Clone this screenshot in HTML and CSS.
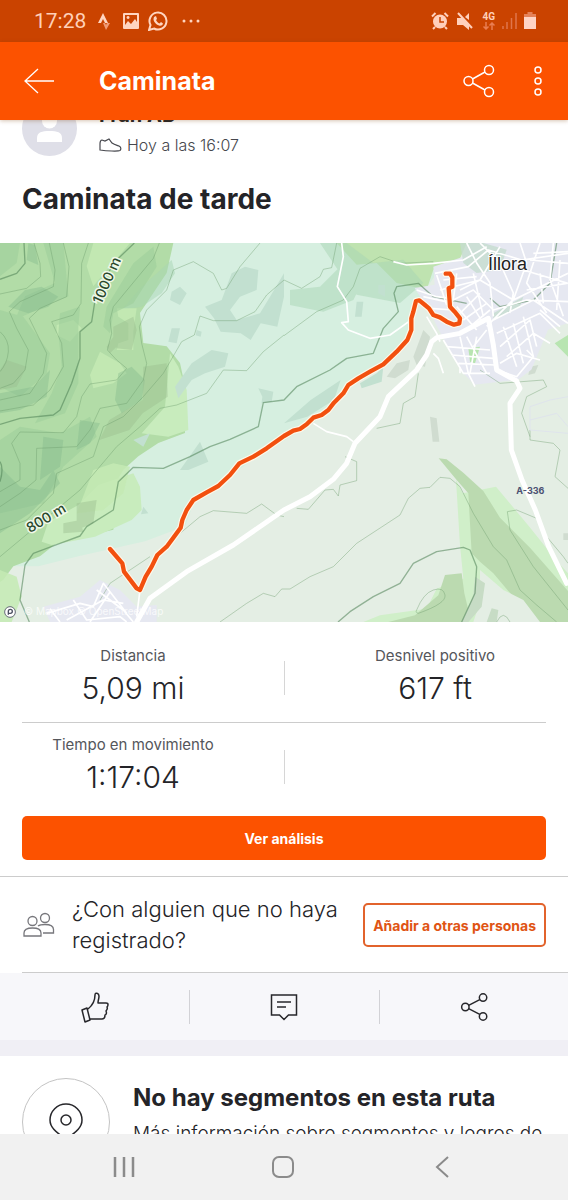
FILE: index.html
```
<!DOCTYPE html>
<html lang="es">
<head>
    <meta charset="UTF-8">
    <meta name="viewport" content="width=device-width, initial-scale=1.0">
    <title>Caminata</title>
    <link rel="stylesheet" href="styles.css">
</head>
<body>
    <div class="status-bar">
        <div class="status-left">
            <span class="clock">17:28</span>
            <svg width="12" height="18" viewBox="0 0 12 18"><path d="M0 11 5 1l5 10H7L5 7l-2 4z" fill="#ffd5c0"/><path d="M5 11h2l1 2 1-2h3l-4 7z" fill="#f09a75"/></svg>
            <svg class="icon-photo" width="18" height="18" viewBox="0 0 18 18"><path fill="#ffd5c0" fill-rule="evenodd" d="M2 1h14a1 1 0 0 1 1 1v14a1 1 0 0 1-1 1H2a1 1 0 0 1-1-1V2a1 1 0 0 1 1-1zm1 2v10l3-4 3 3 4-5 2 3V3zM6 4a1.500 1.500 0 1 0 .1 0z"/></svg>
            <svg width="20" height="20" viewBox="0 0 20 20"><path d="M1 19l1.500-5A8.500 8.500 0 1 1 6 17.500z" fill="none" stroke="#ffd5c0" stroke-width="2"/><path d="M6 6l2-1 1 3-1 1c1 2 2 3 3.500 3.500L13 11l2 1.500c-.5 2-2 2.500-4 2C8 13.500 5.500 10.500 5.500 8z" fill="#ffd5c0"/></svg>
            <svg class="icon-more" width="18" height="4" viewBox="0 0 18 4" fill="#ffd5c0"><circle cx="2" cy="2" r="1.500"/><circle cx="9" cy="2" r="1.500"/><circle cx="16" cy="2" r="1.500"/></svg>
        </div>
        <div class="status-right">
            <svg width="18" height="18" viewBox="0 0 18 18"><circle cx="9" cy="9.500" r="7" fill="#ffd0bc"/><path d="M1 4.500 4.500 1M17 4.500 13.500 1M4 15l-2 2M14 15l2 2" stroke="#ffd0bc" stroke-width="2"/><path d="M9 5v5h4" fill="none" stroke="#ca4300" stroke-width="1.500"/></svg>
            <svg width="18" height="18" viewBox="0 0 18 18"><path d="M1 6h5l7 7v5l-6-5H1zM9 5l4-4v7z" fill="#ffd0bc"/><path d="M2 1l14 15" stroke="#ffd0bc" stroke-width="2"/></svg>
            <span class="network">
                <span class="network-type">4G</span>
                <svg width="12" height="8" viewBox="0 0 12 8"><path d="M3 0v7M.5 4.500 3 7l2.500-2.500M9 8V1M6.500 3.500 9 1l2.500 2.500" fill="none" stroke="#e97d52" stroke-width="1.500"/></svg>
            </span>
            <svg width="15" height="18" viewBox="0 0 15 18"><path d="M1 14v3M5 10v7M9.500 6v11M14 1v16" stroke="#e0764b" stroke-width="1.500"/></svg>
            <svg width="12" height="18" viewBox="0 0 12 18"><path d="M3.500 0h5v2H12v4H0V2h3.500z" fill="#e58258"/><path d="M0 5h12v12H0z" fill="#ffd5c5"/></svg>
        </div>
    </div>

    <header class="app-bar">
        <button class="icon-button" aria-label="Atrás">
            <svg width="30" height="26" viewBox="0 0 30 26"><path d="M30 13H1M14 1 1 13l13 12" fill="none" stroke="#fff" stroke-width="1.300"/></svg>
        </button>
        <h1 class="app-title">Caminata</h1>
        <button class="icon-button" aria-label="Compartir">
            <svg width="32" height="34" viewBox="0 0 32 34" fill="none" stroke="#fff" stroke-width="1.500"><circle cx="5.500" cy="17" r="4.500"/><circle cx="26" cy="6" r="4.500"/><circle cx="26" cy="28" r="4.500"/><path d="M9.500 15 22 8M9.500 19 22 26"/></svg>
        </button>
        <button class="icon-button icon-menu" aria-label="Más opciones">
            <svg width="8" height="30" viewBox="0 0 8 30" fill="none" stroke="#fff" stroke-width="1.500"><circle cx="4" cy="4" r="3"/><circle cx="4" cy="15" r="3"/><circle cx="4" cy="26" r="3"/></svg>
        </button>
    </header>

    <main class="feed">
        <section class="author">
            <svg class="avatar" width="55" height="55" viewBox="0 0 55 55"><circle cx="27.500" cy="27.500" r="27.500" fill="#dfdfe8"/><circle cx="27.500" cy="20" r="7.500" fill="#fff"/><path d="M15 41v-4c0-6 5-7 12.500-7S40 31 40 37v4z" fill="#fff"/></svg>
            <div class="author-text">
                <div class="author-name">Fran AB</div>
                <div class="author-date">
                    <svg width="23" height="14" viewBox="0 0 23 14"><path d="M1 12V6c0-3 1-4 2-4l3 1 4-2 3 4c2 1.500 4 2 7 3 2 1 2.500 3 1 4.500C19 13.500 8 13 1 12z" fill="none" stroke="#46474d" stroke-width="1.200"/></svg>
                    <span>Hoy a las 16:07</span>
                </div>
            </div>
        </section>

        <h2 class="activity-title">Caminata de tarde</h2>

        <svg class="map" viewBox="0 9 1704 1137" role="img" aria-label="Mapa de la ruta">
            <defs>
                <path id="track" d="M1337 101h13l7 11v28l-11 5 4 55 14 15 16 20-2 15-16 4-22-9-20-13-20-7-13-20-12-10-17-14-10 2-8 32-6 20v35l-12 30-32 35-40 38-40 22-35 20-30 20-15 25-28 28-17 22-20 15-25 8-20 20-20 14-20 5-28 16-52 37-40 25-42 20-28 35-35 33-35 19-40 23-20 30-13 30-5 23-22 30-20 27-28 25-17 35-18 30-17 40-10-5-38-50-5-25-37-43"/>
            </defs>
            <rect y="9" width="1704" height="1137" fill="#e4eee4"/>
            <path fill="#d6efe0" d="M0 9h1400l-90 90-60 90-15 80-60 80-130 90-50 70-90 60-160 100-100 70-60 40-30 80-120 45-200 45-120 30H0z"/>

            <!-- woods and slopes -->
            <path fill="#b2dca7" d="M0 9h520l-20 90-80 120 10 90 70 10 40 50 15 70v140l-80 30-60 40-45 40-35 60 10 70-5 50-170 40-50 40-80 30-30 40-45 30-5 120H0z"/>
            <path fill="#c8ecbd" d="M510 340l25 40 25 70 5 120-60 20-80-10 70-80zM400 700l20 40 5 70-30 30-110 50-130 25-30-10 20-60 90-50 60-60z"/>
            <path fill="#bfe3b0" d="M1010 9h390l-30 70-70 10-20 60-90-20-60-60-60 5z"/>
            <path fill="#a7d6b4" opacity=".5" d="M960 9h80l80 60 90-10 60 70-70 60-130-25-60-80zM870 150l90-10 60-60 70 40-30 60-90 35-100-20zM515 60l-90 80-60 70 60-10 60-40 40-60z"/>
            <path fill="#c4eab4" opacity=".85" d="M280 9h110l-60 70-50 60-20-60zM300 335l60 35 20 30-40 30-60 15-10-40zM350 205h60l-10 70v55h-50l5-20 30-10v-50l-30-20zM0 990l50 20 15 60-30 76H0zM170 255l50-15 25 25-35 40-40-20zM280 690l60-20 50 10-20 80-60 50-80 10z"/>
            <path fill="#9fcf9b" opacity=".6" d="M0 9h60l-10 60-50 40zM130 9h60l15 160-70 30-90 40 30-70 90-40zM180 220l60-20-5 60v170l-40 90-90 30 50-90 30-80-10-100zM0 210l70 20 80 110-10 60-80 70-60-30zM0 600l60-40 120 20 90-50 20 60-100 90-60 110-130 30zM400 70l60-50 10 60-70 110-60 30-10 60-20-20 10-60z"/>
            <path fill="#82b98c" opacity=".38" d="M0 460l100-20 50-50-10 80-80 40-60 10zM75 150l50-10 50 30-30 30-60 20-60-20zM85 10l20 5 10 60-35-15zM355 400l40-20 40 40-10 60-60 40-20-40zM240 540l60 10-30 60-40 20zM0 680l60 60 60 10 40-60 20 40-90 90-90 60zM130 590l60 10-10 80-60 40z"/>
            <path fill="#9cbf90" opacity=".45" d="M430 380l70-10 3 100-75 50-40 50-90 30 30-60 100-60zM340 260l60-30 10 40-15 60-45-5-10-25zM230 790l60-10-10 70-50 20zM190 850l50-10 10 35-60 5zM320 320l40-60 20 30-50 50zM20 360l60 20-30 60-50 10v-60z"/>
            <path fill="#c2e0d0" d="M615 200l50-20 30-80 40-20 40 10-5 60-50 20-30 40 20 30 70-20 30-50 42-70V170l-20 90-50-10-30 50-30-20-60-5-20-40zM525 440l50-70 60-40 50 10-10 40-60 20-40 20-40 55zM515 155l25-15 20 20-20 35-30-15zM515 265h25l-10 45-25-5zM590 270l15 5-3 15-15-4zM775 445l45 10-5 30-30 5-10 70 12-90zM540 690l60-85 25 60-60 25zM430 800l15 20-22 3zM1070 185h20l-5 45h-20zM1135 135h20v35l-20-10zM1080 430l50-30 20-20-5 45-60 20zM852 550l80-70 90-60-20 60-80 50zM400 600l50-20-20 40z"/>
            <path fill="#d0dcd0" d="M1160 410l30-40 40-10-5 30-40 25zM1240 350l30-80 20 20-15 90-25-5zM1290 530l20 5 8 70h-20zM1590 380l25-5-10 25-20 5zM1690 880h14v20h-14z"/>
            <path fill="#d0efc9" d="M1368 720l20 40 100-20 100 120 80 100 36 40v146H1090l50-20 140-20 30-60 50-20 30-10-10-100z"/>
            <path fill="#bbdab0" d="M1316 655l24 3 50 40 60 55 50 80 90 90 114 130v93h-100l-124-146-40-35-25-25-10-180-35-40z"/>
            <path fill="#bbdab0" d="M1335 1005l50-5 8 60 12 50-20 36h-220l80-20 70-60z"/>
            <path fill="#e4eee4" d="M1440 990l70 60 60 30 50 66h-200l20-60z"/>
            <path fill="#c7dcc5" d="M1425 1010l30 20-10 70-40 46h-20l35-80zM1475 1105l20 5-5 36h-30z"/>

            <!-- towns -->
            <path fill="#e6e8f1" d="M1300 80l90-30 20-41h294v240l-60 20-50 120-40 30-130 15-40-40-60-110-30-60-50-80 60-10zM130 1100l110-30 60-50 60 30 50 50 60-5v51H150z"/>
            <path fill="#c6dccf" opacity=".8" d="M1380 9h70l70 20-20 60-70 10-40-30zM1480 220l90-50-10 30-80 40z"/>
            <path fill="#b8e5b1" d="M1405 325l35-5-15 50-15-5zM1704 285l-40 25 40 40z"/>

            <g class="contours">
                <path d="M0 162l80-17 42-35-2-40L102 9M148 9l17 81-5 50-100 45-32 30 22 50 35 65-10 60-35 40-40 15M190 9l17 71-7 90-80 35-32 30 22 45 30 60-10 60-40 60-90 20M265 9l-20 61-2 120-23 35-65 20 30 65 5 70-40 70-50 45-100 18"/>
                <path d="M478 9l-18 46-120 145-10 40 5 40-13 50 28 30 30 25-30 35-80 12-25 38-15 60-40 48-130-2-25 34 25 60v50L0 755M0 275q28 25 25 60t-25 60"/>
                <path d="M780 9l-60 71-40 65-15 5-25-50-60-35-60 25-20 60-60 60-22 50 7 50 15 60-10 50-50 70-80 15-30 65-40 50-120 5-2 95-48 40-60 40"/>
                <path d="M852 120l-52 45-35 50-55 27h-70l-40-14-17 57-38 20-55 95-60 70-60 60-60 30-30 90-110 50-10 60-80 80-80 30M852 285l-62 50-50 57-70-2-50 70-90 35-50 10-60 55-70 60-110 130-120 100L0 950"/>
                <path d="M852 120l53 25 55-35 10-22 25-5 15-74M852 287l98-72 80-35 30-40 20-55 60-35 60 20 100-5"/>
                <path d="M845 1047h25l60-37 70-30 70-70 130-85 25-50 35-30 30-3 30-30 30 3 30 25 40 80 60 100 40 40 40 90 50 45 60 51M845 1047l-20 23-35-10-50 30-80 56"/>
                <path d="M540 880l60-50 40-18 100 8 45-28 45 33 22 5M300 1080l30-50 120-80M890 805l35 3 50-58 25-2 15 20 5-33 50-13v-57l-35-15M1255 400l-10 70-35 20-10 60-70 15M1704 1110L1600 980l-70-110-8-55 28-5 60 25 30 55 50 60 14 20M1590 570v30l70 10 20 20-15 80 39 35M1440 390l60 40 130-10 10 20-60 30-15 50 25 70"/>
                <path d="M1250 1110q20-50 50-60t35 15-80 55q-10-2-5-10zM1490 1146q20-40 40 0"/>
            </g>
            <g class="contours major">
                <path d="M0 118l50-18 25-30-3-61M403 9l-53 51-60 90-15 95-35 30v80l-25 75-35 80-20 15-100 10-60 18"/>
                <path d="M1670 9l-20 121-50 50-100 20-30-25M1400 190l-100-20-45-40-65 10-8 20 13 55-45 50-30 75-80 15-50 35-100 50-38 40-62 8-15 72-85 38-60 22-60 30-80 35-90-3-45 43-15 85-80 50-20 28-60 22-80 30-25 35-15 105 28 66"/>
                <path d="M1014 1146l36-31 70-45 80-40 40-60 70-35 80-13 20 8 20 50-5 80-40 86M0 665q12 20 0 60"/>
            </g>

            <g class="streets">
                <path d="M1025 9l5 41-18 90 28 45 5 60-20 3 20 22 65 25 60-10 70-50M1180 65l40 10 80-5 90-10 70-40M1060 605l-20-15-60-15-40-25"/>
                <path d="M1305 100l100-20 60-50 100 30 139-20M1320 150l120-30 100 60 164-80M1340 190l80-40 60 60 100-30 124 5M1400 9l30 60 40 60 10 100M1440 9l60 60 40 90-10 60M1500 20l-60 100-60 30M1560 9l20 60-40 110-80 80M1620 9l-40 120 60 90M1660 9l-10 110 40 110M1570 90l134 40M1590 60l114 10M1600 40l104-5M1580 150l120-20M1620 100l10 90M1680 60l-10 150M1480 240l120-60 104 70M1490 280l130-60 60 60M1500 320l90-80 20 80M1520 350l80-70 50 30M1500 370l50-30 70 20M1540 250l30 120M1570 230l30 120M1510 260l40 120M1620 210l60 50"/>
                <path d="M1250 150l60 20 40 5M1270 170l90 20M1290 205l70 5M1310 105l30 90M1370 100l-10 80M1330 120l100-10M1380 220l60-60M1390 240l70-50M1410 260l60-50M1430 270l-60-70M1450 250l-50-80M1420 100l30 130M1330 300l60 100 80 0M1340 320l130 10M1355 345l125 10M1375 370l110 5M1380 290l25 110 20 40M1430 290l-20 110M1400 290l60 110M1460 270l-40 50M1380 400v-20M1300 340l15 15 15 45M1490 390l60 20 50-60-20-20M1280 230l30 50 10 25"/>
                <path d="M140 1120l100-30 40 10 30-70 70 90M180 1146l-30-40M220 1080l40 60 100-10 20 16M200 1140l110-60 60 10M270 1146l60-90M290 1050l80 60 30 36M420 1050l-10 80"/>
                <path class="track-faint" d="M1590 500l60-20 54-10M1590 500v70l114 10M1590 540l80-20 34 40"/>
            </g>
            <path class="road" d="M410 1146l40-71 110-80 140-80 152-105 78-40 70-52 40-48 25-60 75-80 25-60 85-80 30-45 15-40 15-12 70-13 85-45 15 80 10 75 60 33 10 22-30 45 4 140 32 90 40 90 40 110 54 110"/>

            <g class="map-labels">
                <text x="304" y="194" transform="rotate(-66 304 194)" font-size="42" class="peak">1000 m</text>
                <text x="90" y="880" transform="rotate(-31 90 880)" font-size="42" class="peak">800 m</text>
                <text x="1464" y="91" font-size="54" class="town">Íllora</text>
                <text x="1549" y="762" font-size="27" class="highway">A-336</text>
                <text x="72" y="1126" font-size="30" class="credit">© Mapbox © OpenStreetMap</text>
            </g>
            <circle cx="30" cy="1116" r="16" fill="#fff" stroke="#666a78" stroke-width="3"/>
            <path d="M25 1124v-10a6 6 0 1 1 6 6h-6" fill="none" stroke="#4b4f60" stroke-width="4"/>

            <use href="#track" class="route-halo"/>
            <use href="#track" class="route"/>
        </svg>

        <section class="stats">
            <div class="stats-row">
                <div class="stat">
                    <div class="stat-label">Distancia</div>
                    <div class="stat-value">5,09 mi</div>
                </div>
                <span class="stat-divider"></span>
                <div class="stat">
                    <div class="stat-label">Desnivel positivo</div>
                    <div class="stat-value">617 ft</div>
                </div>
            </div>
            <div class="stats-row">
                <div class="stat">
                    <div class="stat-label">Tiempo en movimiento</div>
                    <div class="stat-value">1:17:04</div>
                </div>
                <span class="stat-divider"></span>
            </div>
            <button class="analysis-button">Ver análisis</button>
        </section>

        <section class="companions">
            <svg width="32" height="26" viewBox="0 0 32 26" fill="none" stroke="#77777c" stroke-width="1.300"><circle cx="9.500" cy="9" r="4.500"/><circle cx="22" cy="6" r="4.500"/><path d="M1 24v-3c0-4 3-5 8.500-5s8.500 1 8.500 5v3zM15 14c2-1.500 4-1.500 7-1.500 6 0 8.500 2 8.500 5V21H20"/></svg>
            <p class="companions-text">¿Con alguien que no haya registrado?</p>
            <button class="add-button">Añadir a otras personas</button>
        </section>

        <div class="actions">
            <button class="action" aria-label="Felicitar">
                <svg width="28" height="31" viewBox="0 0 28 31" fill="none" stroke="#27272b" stroke-width="1.500" stroke-linejoin="round"><path d="M1 18l5-2 3 12-5 2zM7 17c5-4 7-8 7-14 0-3 4-2 4 1 0 3-1 4-1 7h8c3 0 2 3 1 4 1 2 0 3-1 4 1 2 0 4-1 4 0 3-1 4-3 4H9"/></svg>
            </button>
            <button class="action" aria-label="Comentar">
                <svg width="28" height="28" viewBox="0 0 28 28" fill="none" stroke="#27272b" stroke-width="1.500"><path d="M1.500 2h25v20h-8L14 26.500 9.500 22h-8zM7 9h14M7 14h9"/></svg>
            </button>
            <button class="action" aria-label="Compartir actividad">
                <svg width="28" height="28" viewBox="0 0 32 34" fill="none" stroke="#27272b" stroke-width="1.800"><circle cx="5.500" cy="17" r="4.500"/><circle cx="27" cy="5.500" r="4.500"/><circle cx="27" cy="28.500" r="4.500"/><path d="M9.500 15 23 8M9.500 19 23 26"/></svg>
            </button>
        </div>

        <section class="segments">
            <span class="segments-icon">
                <svg width="34" height="38" viewBox="0 0 34 38" fill="none" stroke="#27272b" stroke-width="1.500"><path d="M17 37C15 33 1 28 1 17a16 16 0 0 1 32 0c0 11-14 16-16 20z"/><circle cx="17" cy="17" r="5"/></svg>
            </span>
            <div>
                <h3 class="segments-title">No hay segmentos en esta ruta</h3>
                <p class="segments-text">Más información sobre segmentos y logros de</p>
            </div>
        </section>
    </main>

    <nav class="system-nav">
        <button class="nav-button" aria-label="Recientes">
            <svg width="22" height="22" viewBox="0 0 22 22"><path d="M2 1v20M11 1v20M20 1v20" stroke="#8b8b8b" stroke-width="2.500"/></svg>
        </button>
        <button class="nav-button" aria-label="Inicio">
            <svg width="24" height="24" viewBox="0 0 24 24"><rect x="2" y="2" width="20" height="20" rx="6" fill="none" stroke="#8b8b8b" stroke-width="2"/></svg>
        </button>
        <button class="nav-button" aria-label="Volver">
            <svg width="14" height="22" viewBox="0 0 14 22"><path d="M13 1 2 11l11 10" fill="none" stroke="#8b8b8b" stroke-width="2"/></svg>
        </button>
    </nav>
</body>
</html>
```
FILE: styles.css
```
* {
    box-sizing: border-box;
}

body {
    margin: 0;
    height: 100vh;
    display: flex;
    flex-direction: column;
    overflow: hidden;
    background: #fff;
    color: #242428;
    font-family: Inter, "Liberation Sans", sans-serif;
}

h1, h2, h3, p {
    margin: 0;
}

svg {
    flex-shrink: 0;
}

button {
    border: 0;
    padding: 0;
    background: none;
    font-family: inherit;
    cursor: pointer;
}

/* status bar */
.status-bar {
    flex: none;
    height: 42px;
    padding: 0 32px 0 34px;
    display: flex;
    align-items: center;
    justify-content: space-between;
    background: #ca4300;
    color: #ffd0b8;
}

.status-left,
.status-right {
    display: flex;
    align-items: center;
}

.status-left {
    gap: 12px;
}

.status-right {
    gap: 7px;
}

.clock {
    font-family: Roboto, sans-serif;
    font-size: 21px;
}

.icon-photo {
    margin-right: -4px;
}

.icon-more {
    margin-left: 2px;
}

.network {
    display: flex;
    flex-direction: column;
    align-items: center;
    margin-left: 1px;
}

.network-type {
    font: bold 10px/10px Roboto, sans-serif;
}

/* app bar */
.app-bar {
    flex: none;
    height: 78px;
    padding: 0 26px 0 24px;
    display: flex;
    align-items: center;
    background: #fc5200;
    color: #fff;
    z-index: 1;
    box-shadow: 0 1px 4px rgba(120, 60, 0, 0.3);
}

.icon-button {
    display: flex;
}

.icon-menu {
    margin-left: 39px;
}

.app-title {
    flex: 1;
    margin-left: 45px;
    font-size: 25px;
    font-weight: 700;
}

/* scrolling content */
.feed {
    flex: 1;
    min-height: 0;
    overflow: hidden;
}

.author {
    height: 36px;
    padding: 0 22px;
    display: flex;
    align-items: flex-end;
    gap: 22px;
    overflow: hidden;
}

.author-name {
    font-size: 20px;
    font-weight: 700;
    line-height: 26px;
}

.author-date {
    display: flex;
    align-items: center;
    gap: 5px;
    padding-top: 6px;
    color: #46474d;
    font-size: 16px;
    font-weight: 300;
    line-height: 22px;
}

.activity-title {
    padding: 24px 22px;
    font-size: 28px;
    font-weight: 700;
    line-height: 39px;
}

/* map */
.map {
    display: block;
    width: 100%;
}

.contours {
    fill: none;
    stroke: #6b9a6b;
    stroke-opacity: 0.4;
    stroke-width: 3;
    stroke-linejoin: round;
}

.major {
    stroke: #4d8054;
    stroke-opacity: 0.55;
    stroke-width: 4;
}

.streets {
    fill: none;
    stroke: #fff;
    stroke-width: 5;
    stroke-linejoin: round;
}

.track-faint {
    stroke: #dfe4ec;
    stroke-width: 3;
}

.road,
.route,
.route-halo {
    fill: none;
    stroke: #fff;
    stroke-width: 15;
    stroke-linejoin: round;
    stroke-linecap: round;
}

.route-halo {
    stroke: #fdf8ea;
    stroke-width: 20;
}

.route {
    stroke: #f2500f;
    stroke-width: 13;
}

.peak {
    fill: #29472b;
    font-weight: 500;
    stroke: #eff8e8;
    stroke-width: 9;
    paint-order: stroke;
}

.town {
    fill: #222;
    font-family: "Liberation Sans", sans-serif;
    stroke: #fff;
    stroke-width: 6;
    paint-order: stroke;
}

.highway {
    fill: #4b5072;
    font-weight: 700;
}

.credit {
    fill: #fff;
    fill-opacity: 0.75;
}

/* stats */
.stats {
    padding: 12px 22px 16px;
    border-bottom: 1px solid #ccc;
}

.stats-row {
    display: grid;
    grid-template-columns: 1fr 80px 1fr;
    align-items: center;
    justify-items: center;
    padding: 12px 0;
}

.stats-row:first-child {
    border-bottom: 1px solid #ccc;
}

.stat {
    text-align: center;
}

.stat-label {
    color: #55565b;
    font-size: 15px;
    line-height: 20px;
}

.stat-value {
    font-size: 30px;
    font-weight: 300;
    line-height: 44px;
}

.stat-divider {
    width: 1px;
    height: 34px;
    background: #d6d6d6;
}

.analysis-button {
    display: block;
    width: 100%;
    height: 44px;
    margin-top: 5px;
    border-radius: 5px;
    background: #fc5200;
    color: #fff;
    font-size: 14px;
    font-weight: 700;
}

/* add people */
.companions {
    margin-left: 22px;
    padding: 17px 22px 16px 1px;
    display: flex;
    align-items: center;
    gap: 17px;
    border-bottom: 1px solid #ccc;
}

.companions-text {
    flex: 1;
    font-size: 22px;
    font-weight: 300;
    line-height: 31px;
}

.add-button {
    height: 44px;
    padding: 0 8px;
    border: 2px solid #e2632c;
    border-radius: 5px;
    color: #e05414;
    font-size: 14px;
    font-weight: 700;
}

/* actions */
.actions {
    display: grid;
    grid-template-columns: 1fr 1fr 1fr;
    padding: 17px 0 16px;
    border-bottom: 16px solid #f0eff5;
    background: #f7f7fa;
}

.action {
    height: 34px;
    display: flex;
    align-items: center;
    justify-content: center;
}

.action + .action {
    border-left: 1px solid #d2d2d6;
}

/* segments */
.segments {
    display: flex;
    align-items: flex-start;
    gap: 23px;
    padding: 22px;
}

.segments-icon {
    flex: none;
    width: 88px;
    height: 88px;
    display: flex;
    align-items: center;
    justify-content: center;
    border: 1px solid #c4c4c4;
    border-radius: 50%;
}

.segments-title {
    font-size: 24px;
    font-weight: 700;
    line-height: 40px;
}

.segments-text {
    font-size: 19px;
    font-weight: 300;
    line-height: 32px;
}

/* system navigation */
.system-nav {
    flex: none;
    height: 66px;
    padding: 0 47px 0 44px;
    display: grid;
    grid-template-columns: 1fr 1fr 1fr;
    background: #f1f1f1;
}

.nav-button {
    display: flex;
    align-items: center;
    justify-content: center;
}
```
